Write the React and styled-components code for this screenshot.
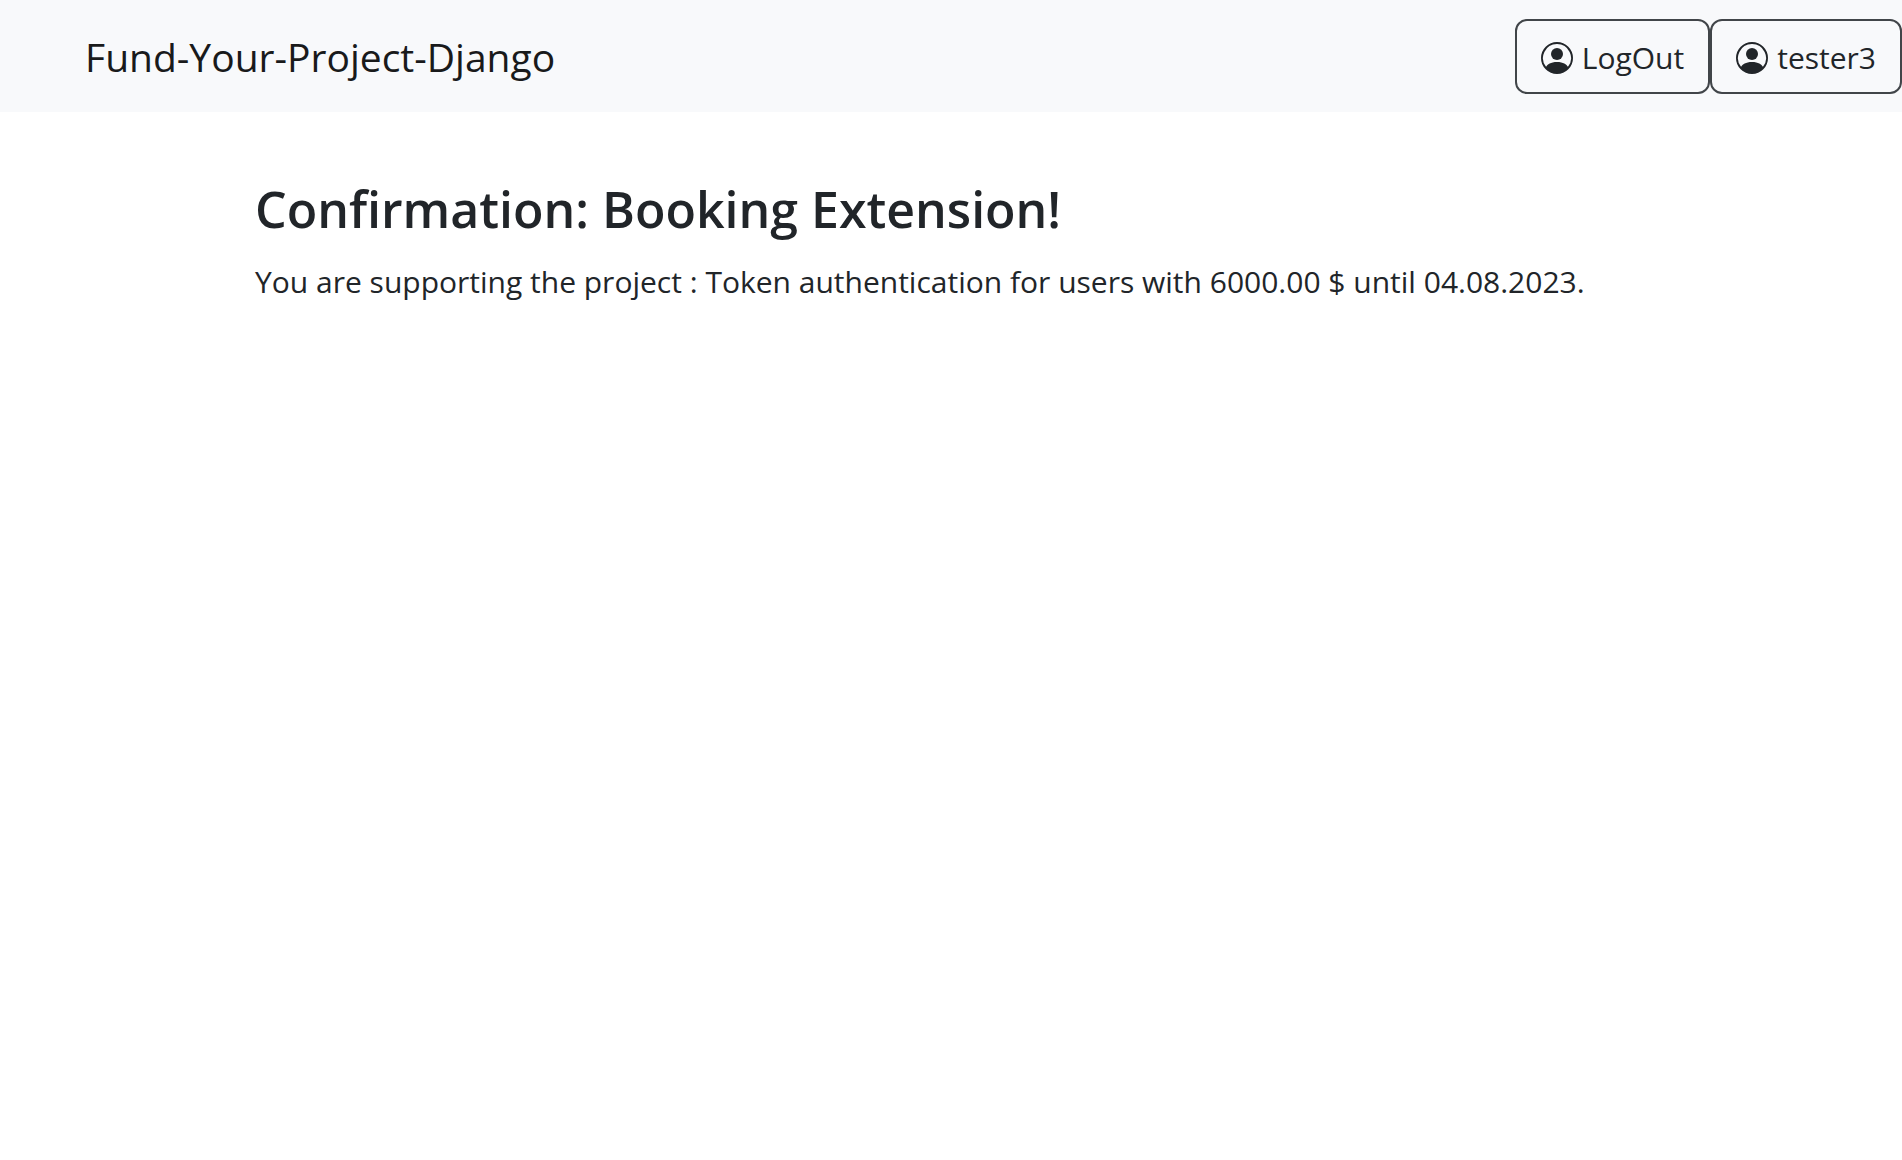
import React from "react";
import styled, { createGlobalStyle } from "styled-components";
import { BsPersonCircle } from "react-icons/bs";

const GlobalStyle = createGlobalStyle`
  *, *::before, *::after {
    box-sizing: border-box;
  }

  body {
    margin: 0;
    background: #ffffff;
    color: #212529;
    font-family: "Segoe UI", "Open Sans", "Noto Sans", sans-serif;
    font-size: 30px;
    line-height: 48px;
  }
`;

const Navbar = styled.nav`
  display: flex;
  align-items: center;
  justify-content: space-between;
  padding: 19px 0 18px 85px;
  background: #f8f9fb;
`;

const Brand = styled.a`
  color: #191a1b;
  font-size: 39px;
  line-height: 60px;
  text-decoration: none;
  white-space: nowrap;
`;

const Actions = styled.div`
  display: flex;
`;

const NavButton = styled.button`
  display: flex;
  align-items: center;
  gap: 9px;
  padding: 13px 24px 10px;
  border: 2px solid #414549;
  border-radius: 12px;
  background: transparent;
  color: #212529;
  font: inherit;
  white-space: nowrap;
  cursor: pointer;
`;

const Content = styled.main`
  max-width: 1440px;
  margin: 0 auto;
  padding: 64px 24px;
`;

const Title = styled.h1`
  margin: 0 0 16px;
  font-size: 50px;
  font-weight: 600;
  line-height: 66px;
`;

const Message = styled.p`
  margin: 0;
`;

export default function App() {
  return (
    <>
      <GlobalStyle />
      <Navbar>
        <Brand href="#">Fund-Your-Project-Django</Brand>
        <Actions>
          <NavButton type="button">
            <BsPersonCircle size={32} aria-hidden="true" />
            LogOut
          </NavButton>
          <NavButton type="button">
            <BsPersonCircle size={32} aria-hidden="true" />
            tester3
          </NavButton>
        </Actions>
      </Navbar>
      <Content>
        <Title>Confirmation: Booking Extension!</Title>
        <Message>
          You are supporting the project : Token authentication for users with
          6000.00 $ until 04.08.2023.
        </Message>
      </Content>
    </>
  );
}
